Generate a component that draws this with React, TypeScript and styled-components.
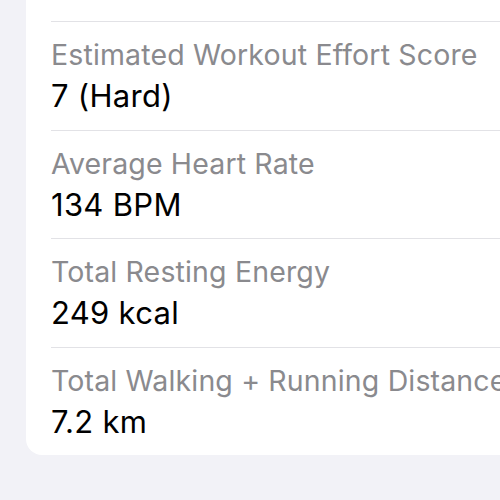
import styled, { createGlobalStyle } from "styled-components";

const GlobalStyle = createGlobalStyle`
  html, body {
    margin: 0;
    padding: 0;
    background: #f2f2f7;
    overflow: hidden;
  }

  body {
    font-family: Inter, "Noto Sans", sans-serif;
    -webkit-font-smoothing: antialiased;
  }
`;

const Page = styled.div`
  width: 500px;
  height: 500px;
  padding-left: 26px;
  box-sizing: border-box;
  overflow: hidden;
`;

const Card = styled.ul`
  width: 560px;
  margin: 0;
  padding: 21px 0 0 25px;
  list-style: none;
  background: #fff;
  border-radius: 0 0 16px 16px;
  box-sizing: border-box;
`;

const Row = styled.li`
  display: flex;
  flex-direction: column;
  gap: 6px;
  padding: 16px 0 15.5px;
  border-top: 1px solid #e2e2e6;
`;

const Label = styled.span`
  font-size: 28.5px;
  line-height: 34px;
  letter-spacing: 0.15px;
  color: #8a8a8e;
  white-space: nowrap;
`;

const Value = styled.span`
  font-size: 31px;
  line-height: 36px;
  letter-spacing: 0.3px;
  color: #000;
  white-space: nowrap;
`;

const metrics = [
  { label: "Estimated Workout Effort Score", value: "7 (Hard)" },
  { label: "Average Heart Rate", value: "134 BPM" },
  { label: "Total Resting Energy", value: "249 kcal" },
  { label: "Total Walking + Running Distance", value: "7.2 km" },
];

const App = () => (
  <>
    <GlobalStyle />
    <Page>
      <Card>
        {metrics.map((m) => (
          <Row key={m.label}>
            <Label>{m.label}</Label>
            <Value>{m.value}</Value>
          </Row>
        ))}
      </Card>
    </Page>
  </>
);

export default App;
